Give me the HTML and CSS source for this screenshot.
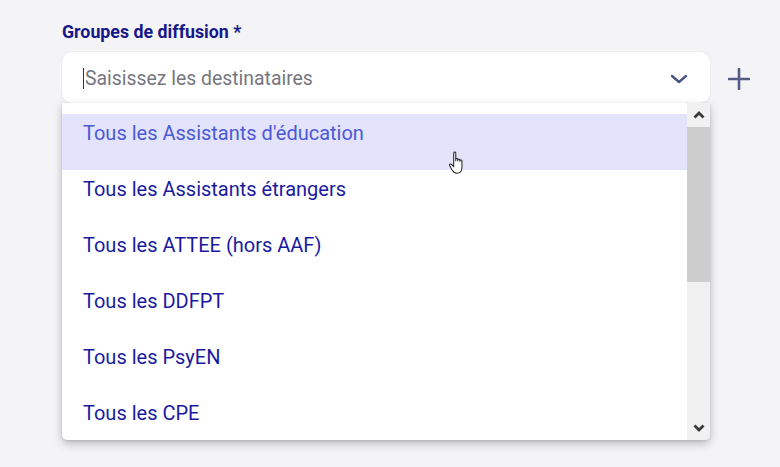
FILE: index.html
```html
<!DOCTYPE html>
<html lang="fr">
<head>
<meta charset="utf-8">
<link rel="stylesheet" href="styles.css">
</head>
<body>
<div class="field">
  <label class="label">Groupes de diffusion *</label>
  <div class="row">
    <div class="combo">
      <div class="input">
        <span class="caret"></span><span class="placeholder">Saisissez les destinataires</span>
        <svg class="chev" width="18" height="12" viewBox="0 0 18 12"><path d="M2 3 L9 9 L16 3" fill="none" stroke="#4b5585" stroke-width="2.4" stroke-linecap="round" stroke-linejoin="round"/></svg>
      </div>
      <div class="dropdown">
        <ul class="list">
          <li class="item active">Tous les Assistants d'éducation</li>
          <li class="item">Tous les Assistants étrangers</li>
          <li class="item">Tous les ATTEE (hors AAF)</li>
          <li class="item">Tous les DDFPT</li>
          <li class="item">Tous les PsyEN</li>
          <li class="item">Tous les CPE</li>
        </ul>
        <div class="scrollbar">
          <div class="sb-btn"><svg width="12" height="8" viewBox="0 0 12 8"><path d="M1.5 6.5 L6 2 L10.5 6.5" fill="none" stroke="#3a3a3a" stroke-width="2.8"/></svg></div>
          <div class="sb-thumb"></div>
          <div class="sb-track"></div>
          <div class="sb-btn"><svg width="12" height="8" viewBox="0 0 12 8"><path d="M1.5 1.5 L6 6 L10.5 1.5" fill="none" stroke="#3a3a3a" stroke-width="2.8"/></svg></div>
        </div>
        <svg class="cursor" width="18" height="24" viewBox="0 0 14 21"><path d="M5 1.5 C5 0.6 6.8 0.6 6.8 1.5 L6.8 9 L6.8 7.2 C6.8 6.3 8.6 6.3 8.6 7.2 L8.6 9 L8.6 7.8 C8.6 6.9 10.4 6.9 10.4 7.8 L10.4 9.5 L10.4 8.6 C10.4 7.7 12.2 7.7 12.2 8.6 L12.2 14 C12.2 17 10.8 19.5 8 19.5 C5.6 19.5 4.6 18.4 3.6 16.6 L1.4 12.6 C0.9 11.7 2 10.9 2.8 11.6 L5 13.6 Z" fill="#fff" stroke="#222" stroke-width="0.9"/></svg>
      </div>
    </div>
    <svg class="plus" width="22" height="22" viewBox="0 0 22 22"><path d="M11 1 V21 M1 11 H21" stroke="#515b86" stroke-width="2.6" stroke-linecap="round"/></svg>
  </div>
</div>
</body>
</html>
```
FILE: styles.css
```css
* { box-sizing: border-box; }
html, body { margin: 0; padding: 0; }
body {
  background: #f4f4f7;
  font-family: Roboto, "Liberation Sans", sans-serif;
  width: 780px;
  height: 467px;
  overflow: hidden;
}
.field {
  padding: 21px 0 0 62px;
}
.label {
  display: block;
  font-size: 17.8px;
  font-weight: 700;
  color: #17178a;
  line-height: 22px;
  height: 31px;
}
.row {
  display: flex;
  align-items: flex-start;
  gap: 18px;
}
.combo {
  width: 648px;
  position: relative;
}
.input {
  height: 51px;
  background: #fff;
  border-radius: 10px;
  box-shadow: 0 0 0 1px #ececf1;
  display: flex;
  align-items: center;
  padding: 2px 22px 0 21px;
  font-size: 19.4px;
}
.caret {
  width: 1px;
  height: 21px;
  background: #1d1ddb;
  margin-right: 1px;
}
.placeholder {
  color: #76767e;
  flex: 1;
}
.chev { display: block; }
.plus { margin-top: 16px; }
.dropdown {
  position: absolute;
  top: 51px;
  left: 0;
  width: 648px;
  height: 337px;
  background: #fff;
  border-radius: 0 0 5px 5px;
  box-shadow: 0 4px 10px rgba(0,0,0,0.22), 0 1px 3px rgba(0,0,0,0.12);
  display: flex;
  overflow: hidden;
}
.list {
  list-style: none;
  margin: 0;
  padding: 11px 0 0 0;
  flex: 1;
  overflow: hidden;
}
.item {
  height: 56px;
  line-height: 38px;
  padding-left: 21px;
  font-size: 20px;
  color: #1a1aa0;
  white-space: nowrap;
}
.item.active {
  background: #e3e3fb;
  color: #4c59d6;
}
.scrollbar {
  width: 23px;
  display: flex;
  flex-direction: column;
  background: #f0f0f0;
}
.sb-btn {
  height: 24px;
  display: flex;
  align-items: center;
  justify-content: center;
  background: #f1f1f1;
}
.sb-thumb {
  height: 155px;
  background: #cdcdcd;
}
.sb-track { flex: 1; }
.cursor {
  position: absolute;
  left: 385px;
  top: 48px;
}
```
